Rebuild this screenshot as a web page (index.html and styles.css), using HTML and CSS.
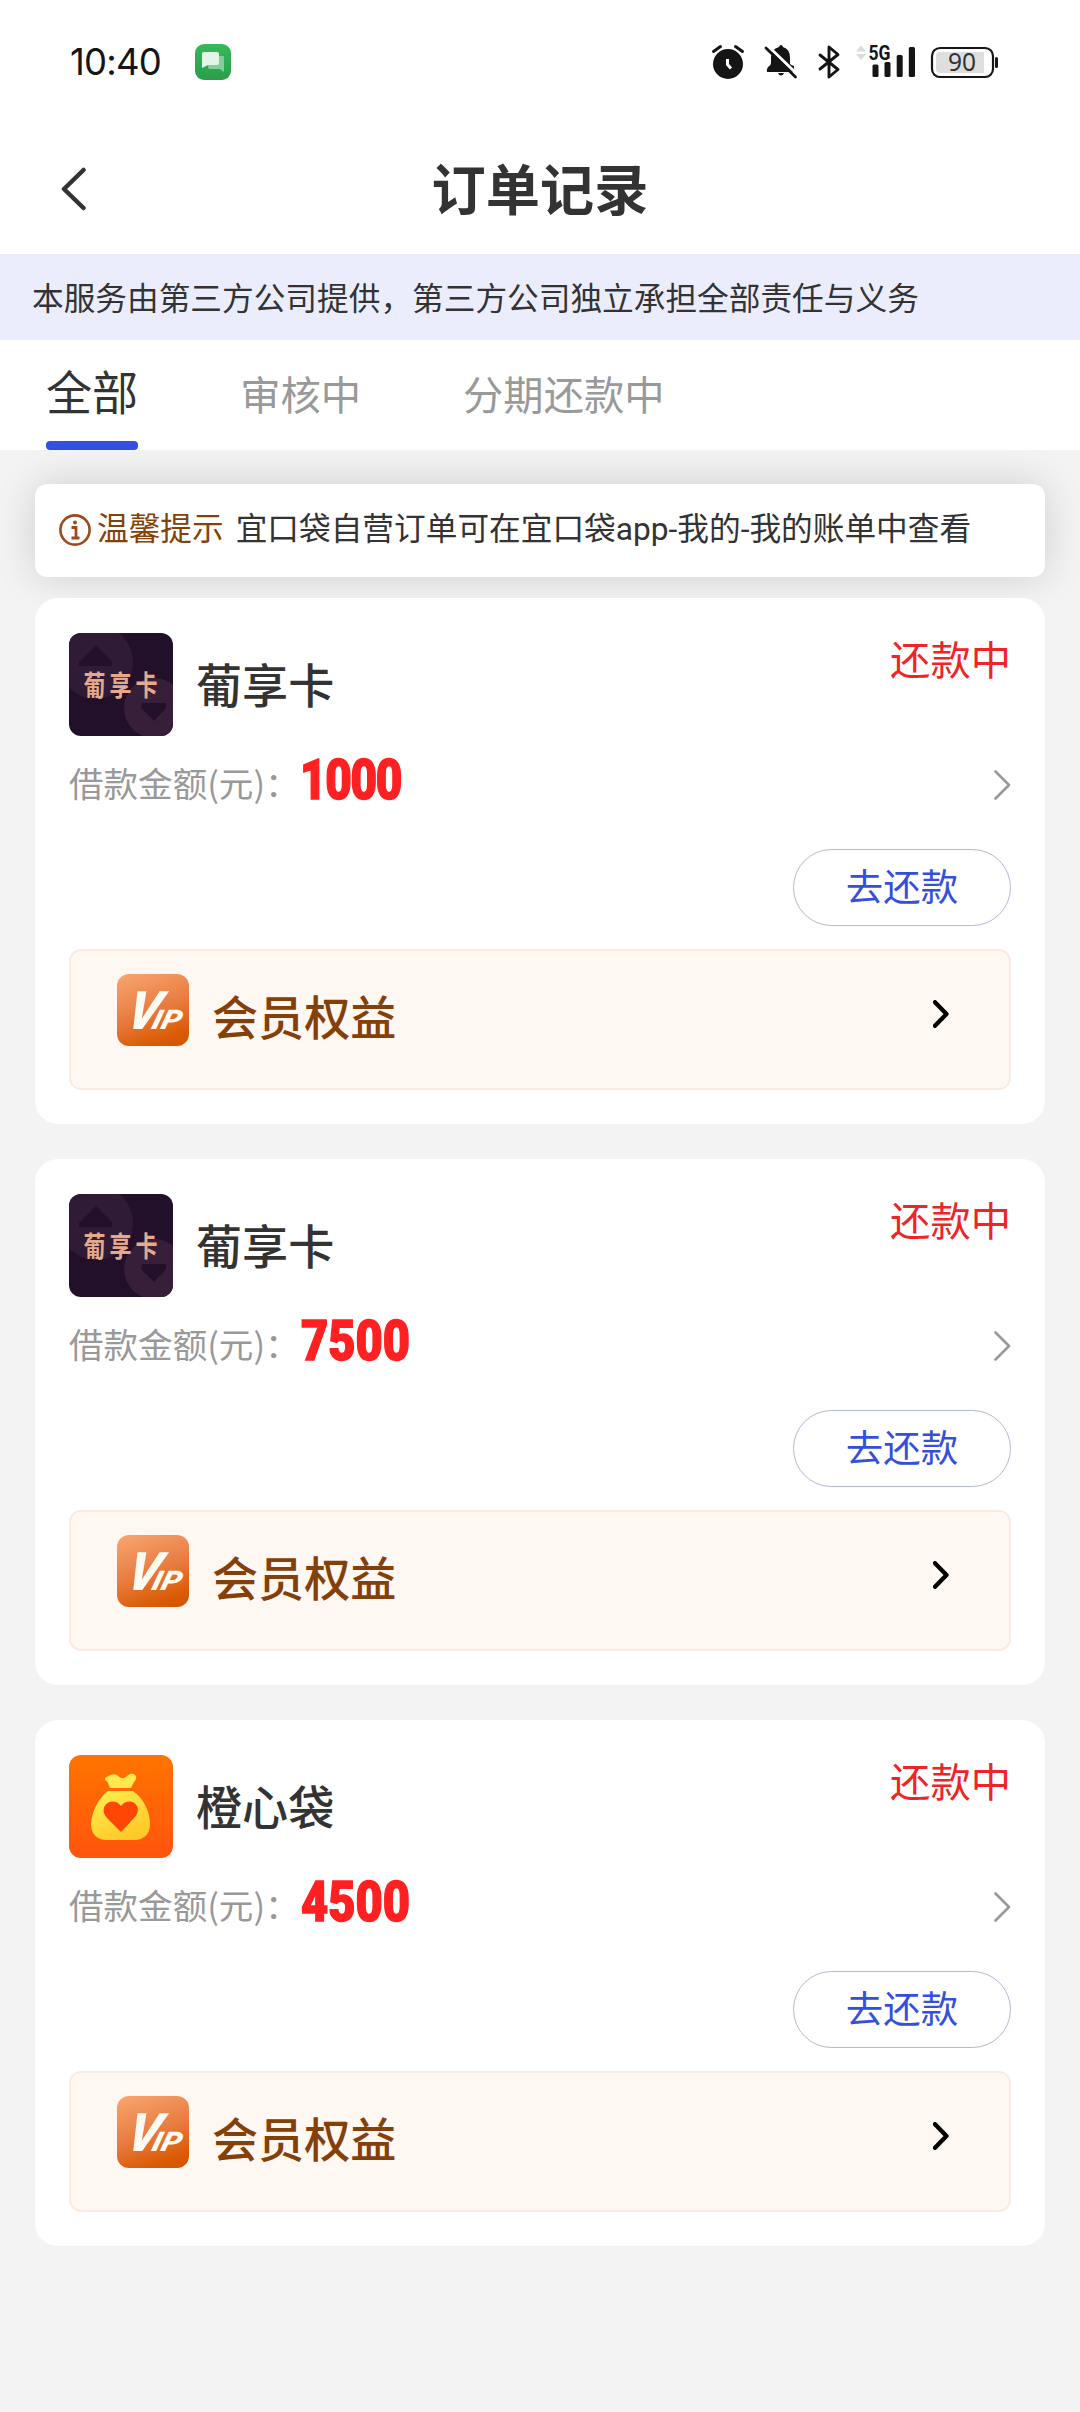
FILE: index.html
```html
<!DOCTYPE html>
<html lang="zh-CN">
<head>
<meta charset="utf-8">
<title>订单记录</title>
<link rel="stylesheet" href="styles.css">
</head>
<body>
<svg class="defs" width="0" height="0" aria-hidden="true">
  <defs>
    <linearGradient id="bagBg" x1="0" y1="0" x2="0" y2="1">
      <stop offset="0" stop-color="#ff7400"/><stop offset="1" stop-color="#ff540e"/>
    </linearGradient>
    <linearGradient id="bagFill" x1="0" y1="0" x2="0.6" y2="1">
      <stop offset="0" stop-color="#fff04e"/><stop offset="1" stop-color="#ffc928"/>
    </linearGradient>
    <linearGradient id="msgFill" x1="0" y1="0" x2="0" y2="1">
      <stop offset="0" stop-color="#36b95c"/><stop offset="1" stop-color="#2a9d49"/>
    </linearGradient>
  </defs>
  <symbol id="logo-card" viewBox="0 0 104 104">
    <rect width="104" height="104" fill="#220f29"/>
    <circle cx="27" cy="29" r="37" fill="#2f1b36"/>
    <path d="M27 12 43 28V33H10V29Z" fill="#220f29"/>
    <circle cx="85" cy="75" r="30" fill="#371f39"/>
    <path d="M73 70H97V75L85 88 72 75Z" fill="#220f29"/>
  </symbol>
  <symbol id="logo-bag" viewBox="0 0 104 104">
    <rect width="104" height="104" fill="url(#bagBg)"/>
    <path d="M36 23C41 20 45 18 48 20Q53 26 58 21Q63 16 67 21Q68 24 65 27L62 33H41L39 28Q38 26 36 25Z" fill="#ffe94d"/>
    <path d="M39 36H64C74 43 81 56 81 69C81 79 75 85 65 85H38C28 85 22 79 22 69C23 55 30 43 39 36Z" fill="url(#bagFill)"/>
    <path d="M52 77 38 63C30 54 38 44 47 47Q50 48 52 51Q54 48 57 47C66 44 74 54 65 63Z" fill="#ff4605"/>
  </symbol>
  <symbol id="chev" viewBox="0 0 17 30"><path d="M1.500 1.500 15 15 1.500 28.500" fill="none" stroke="#999" stroke-width="2.600" stroke-linecap="round" stroke-linejoin="round"/></symbol>
  <symbol id="chev-bold" viewBox="0 0 16 28"><path d="M2 2.200 13.500 14 2 25.800" fill="none" stroke="#000" stroke-width="4.300" stroke-linecap="round" stroke-linejoin="round"/></symbol>
</svg>

<header class="status">
  <time class="clock">10:40</time>
  <svg class="msg" width="36" height="36" viewBox="0 0 36 36">
    <rect width="36" height="36" rx="9" fill="url(#msgFill)"/>
    <path d="M14 14Q14 12 16 12H28Q29 12 29 13V28L25 25H15Q13 25 13 23Z" fill="#83cf98"/>
    <path d="M9 8H22Q24 8 24 10V19Q24 21 22 21H13L7 24V10Q7 8 9 8Z" fill="#e3f6e6"/>
  </svg>
  <svg class="tray" width="290" height="60" viewBox="710 32 290 60">
    <g fill="#151515">
      <circle cx="728" cy="64" r="15"/>
      <path d="M713.500 51.500 720.500 46.500M742.500 51.500 735.500 46.500" stroke="#151515" stroke-width="3" stroke-linecap="round"/>
      <path d="M727.500 59V64.500L731 68.500" fill="none" stroke="#fff" stroke-width="3"/>
      <path d="M781 45Q782.500 45 783 47Q790 49 790 58V64Q791 65 794 66V72H767Q766 68 770 65.500Q771 65 771 62V57Q771 49 779 47Q779.500 45 781 45ZM778 73H784Q783 75.500 781 75.500Q779 75.500 778 73Z"/>
      <path d="M769 47 798 75" stroke="#fff" stroke-width="3"/>
      <path d="M766 48 795.500 77" stroke="#151515" stroke-width="2.800" stroke-linecap="round"/>
      <path d="M820 55 838 69.500 829 77V47L838 54.500 820 69" fill="none" stroke="#151515" stroke-width="2.900" stroke-linejoin="round" stroke-linecap="round"/>
      <path d="M861 45.500 866 51.500H856ZM861 60 866 54H856Z" fill="#dcdcdc"/>
      <rect x="872.500" y="64.500" width="6" height="12.500" rx="1.500"/><rect x="884.500" y="62" width="6" height="15" rx="1.500"/>
      <rect x="896.700" y="55" width="6" height="22" rx="1.500"/><rect x="908.800" y="47" width="6.200" height="30" rx="1.500"/>
      <text class="net" x="868.500" y="60" textLength="22" lengthAdjust="spacingAndGlyphs">5G</text>
      <rect x="995" y="57" width="3" height="11" rx="1.500"/>
    </g>
    <rect x="932" y="48" width="61" height="29" rx="8" fill="none" stroke="#151515" stroke-width="2.200"/>
    <path d="M940 52H984V73H940Q936 73 936 69V56Q936 52 940 52Z" fill="#dedede"/>
    <text class="batt" x="948" y="70.800" textLength="28" lengthAdjust="spacingAndGlyphs">90</text>
  </svg>
</header>

<nav class="bar">
  <svg class="back" width="25" height="44" viewBox="0 0 25 44"><path d="M22.500 3 3 22 22.500 41" fill="none" stroke="#333" stroke-width="4.500" stroke-linecap="round" stroke-linejoin="round"/></svg>
  <h1 class="title">订单记录</h1>
</nav>
<p class="banner">本服务由第三方公司提供，第三方公司独立承担全部责任与义务</p>
<div class="tabs">
  <span class="tab active">全部</span><span class="tab">审核中</span><span class="tab">分期还款中</span>
</div>

<main class="content">
  <section class="notice">
    <svg class="info" width="32" height="32" viewBox="0 0 32 32"><circle cx="16" cy="16" r="14.600" fill="none" stroke="#9c4a1d" stroke-width="2.600"/><path d="M12.500 13.500H17V23.500M12.500 24H20.500" fill="none" stroke="#9c4a1d" stroke-width="2.800"/><circle cx="16" cy="8.500" r="2" fill="#9c4a1d"/></svg>
    <strong class="tip">温馨提示</strong><span>宜口袋自营订单可在宜口袋app-我的-我的账单中查看</span>
  </section>

  <article class="card">
    <div class="head"><div class="logo"><svg width="104" height="104"><use href="#logo-card"/></svg><span class="logo-text">葡享卡</span></div><h2 class="name">葡享卡</h2><span class="state">还款中</span></div>
    <div class="amount"><span class="label">借款金额(元)：</span><b class="num lead-one">1000</b><svg class="go" width="17" height="30"><use href="#chev"/></svg></div>
    <button class="pay">去还款</button>
    <div class="vip"><div class="vip-icon"><span class="vip-v">V</span><span class="vip-ip">IP</span></div><span class="vip-label">会员权益</span><svg class="vip-go" width="16" height="28"><use href="#chev-bold"/></svg></div>
  </article>

  <article class="card">
    <div class="head"><div class="logo"><svg width="104" height="104"><use href="#logo-card"/></svg><span class="logo-text">葡享卡</span></div><h2 class="name">葡享卡</h2><span class="state">还款中</span></div>
    <div class="amount"><span class="label">借款金额(元)：</span><b class="num">7500</b><svg class="go" width="17" height="30"><use href="#chev"/></svg></div>
    <button class="pay">去还款</button>
    <div class="vip"><div class="vip-icon"><span class="vip-v">V</span><span class="vip-ip">IP</span></div><span class="vip-label">会员权益</span><svg class="vip-go" width="16" height="28"><use href="#chev-bold"/></svg></div>
  </article>

  <article class="card">
    <div class="head"><div class="logo"><svg width="104" height="104"><use href="#logo-bag"/></svg></div><h2 class="name">橙心袋</h2><span class="state">还款中</span></div>
    <div class="amount"><span class="label">借款金额(元)：</span><b class="num">4500</b><svg class="go" width="17" height="30"><use href="#chev"/></svg></div>
    <button class="pay">去还款</button>
    <div class="vip"><div class="vip-icon"><span class="vip-v">V</span><span class="vip-ip">IP</span></div><span class="vip-label">会员权益</span><svg class="vip-go" width="16" height="28"><use href="#chev-bold"/></svg></div>
  </article>
</main>
</body>
</html>
```
FILE: styles.css
```css
* { box-sizing: border-box; margin: 0; padding: 0; }
body {
  width: 1080px;
  min-height: 2412px;
  background: #f3f3f3;
  color: #333;
  font-family: "Noto Sans CJK SC", sans-serif;
}
svg { display: block; flex: none; }
.defs { position: absolute; }

.status { display: flex; align-items: center; height: 124px; padding: 0 80px 0 70px; background: #fff; }
.clock { width: 125px; font: 400 36.500px/1 Inter, sans-serif; letter-spacing: -0.8px; color: #151515; }
.tray { margin-left: auto; }
.net { font: 700 20px Roboto, sans-serif; }
.batt { font: 400 25px "Noto Sans", sans-serif; fill: #333; }

.bar { display: flex; align-items: center; height: 130px; padding: 0 61px; background: #fff; }
.title { flex: 1; margin-right: 25px; padding-bottom: 4px; text-align: center; font-size: 54.200px; line-height: 80px; font-weight: 700; }
.banner { height: 86px; padding-left: 32px; background: #ebedfd; font-size: 31.680px; line-height: 84px; }
.tabs { display: flex; gap: 102px; height: 110px; padding-left: 46px; background: #fff; }
.tab { font-size: 40.300px; line-height: 106px; color: #999; }
.tab.active { font-size: 46.080px; line-height: 101px; color: #333; }
.tab.active::after { content: ""; display: block; height: 9px; border-radius: 4px; background: #3450e4; }

.content { display: flex; flex-direction: column; gap: 35px; padding: 34px 35px; }
.notice {
  display: flex;
  align-items: center;
  height: 93px;
  margin-bottom: -14px;
  padding: 0 24px;
  border-radius: 12px;
  background: #fff;
  box-shadow: 0 0 40px rgba(0, 0, 0, .15);
  font-family: Roboto, "Noto Sans CJK SC", sans-serif;
  font-size: 31.680px;
  line-height: 91px;
  white-space: nowrap;
}
.notice > :not(.info) { height: 93px; }
.info { margin-bottom: 2px; }
.tip { margin: 0 12px 0 6px; color: #844108; font-weight: 400; }

.card { display: flex; flex-direction: column; height: 526px; padding: 35px 34px 34px; border-radius: 23px; background: #fff; }
.head { display: flex; flex: none; height: 104px; }
.logo { display: grid; width: 104px; height: 103px; overflow: hidden; border-radius: 12px; }
.logo > * { grid-area: 1 / 1; }
.logo-text {
  align-self: center;
  justify-self: center;
  margin-top: -4px;
  color: #e4aa8b;
  font-size: 22px;
  line-height: 40px;
  font-weight: 700;
  letter-spacing: 4px;
  text-indent: 3px;
  transform: scaleY(1.300);
}
.name { margin-left: 23px; font-size: 46.080px; line-height: 100px; font-weight: 500; }
.state { margin-left: auto; color: #ee2426; font-size: 40.300px; line-height: 50px; }
.amount { display: flex; flex: none; align-items: center; height: 96px; color: #999; }
.label { height: 96px; font-size: 34.560px; line-height: 91px; }
.num {
  margin: -11px 0 0 1px;
  color: #ff2022;
  font: 900 56px/96px Roboto, sans-serif;
  -webkit-text-stroke: 1.500px #ff2022;
  transform: scaleX(.84);
  transform-origin: left;
}
.num.lead-one { margin-left: 0; letter-spacing: -1.700px; transform: scaleX(.82); }
.go { margin-left: auto; }
.pay {
  align-self: flex-end;
  flex: none;
  width: 218px;
  height: 77px;
  margin: 16px 0 23px;
  padding-bottom: 5px;
  border: 1px solid #b3b7dc;
  border-radius: 39px;
  background: #fff;
  color: #344fdc;
  font: 400 37.440px/70px "Noto Sans CJK SC", sans-serif;
}

.vip { display: flex; flex: none; height: 141px; padding: 23px 60px 0 46px; border: 2px solid #faebe3; border-radius: 12px; background: #fff7f1; }
.vip-icon {
  display: flex;
  align-items: baseline;
  width: 72px;
  height: 72px;
  padding-left: 7px;
  border-radius: 12px;
  background: linear-gradient(160deg, #f9a672, #e87c40 50%, #d95a02 85%, #d45500);
  color: #fffaf2;
  font-family: Roboto, sans-serif;
  font-weight: 900;
  font-style: italic;
  line-height: 75px;
}
.vip-v { width: 24px; font-size: 53px; transform: skewX(-15deg) scaleX(.92); transform-origin: 0 74%; }
.vip-ip { font-size: 27px; transform: skewX(-15deg) scaleX(1.150); transform-origin: 0 74%; }
.vip-label { margin-left: 23px; color: #83400a; font-size: 46.080px; line-height: 82px; font-weight: 500; }
.vip-go { margin: 26px 0 0 auto; }
```
